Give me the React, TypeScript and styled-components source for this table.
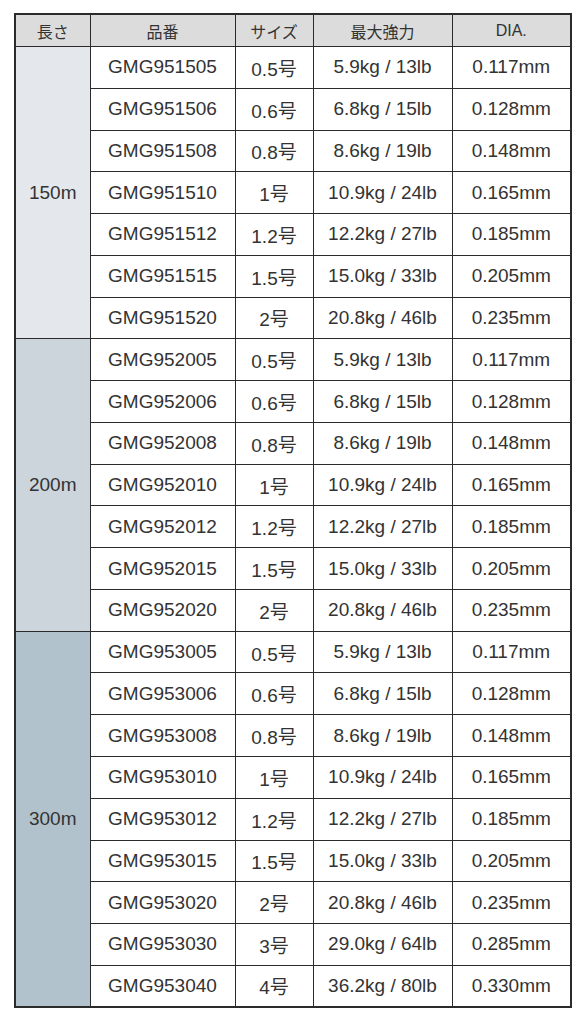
import React from "react";
import styled, { createGlobalStyle } from "styled-components";

const GlobalStyle = createGlobalStyle`
  body {
    margin:0;
    background:#fff;
    font-family:"Liberation Sans", "Noto Sans CJK JP", sans-serif;
  }
`;

const Wrapper = styled.div`
  padding:13px 14px 0 14px;
`;

const Table = styled.table`
  width:556px;
  border-collapse:collapse;
  table-layout:fixed;
  border:2px solid #2b2b2b;
  color:#333;
`;

const HeadCell = styled.th`
  height:31px;
  padding:0;
  background:#dcdcdc;
  border:1px solid #2b2b2b;
  font-weight:normal;
  font-size:16px;
  text-align:center;
  vertical-align:middle;
`;

const Row = styled.tr`
  height:41.78px;
`;

const Cell = styled.td`
  padding:0;
  border:1px solid #2b2b2b;
  font-size:19px;
  text-align:center;
  vertical-align:middle;
  background:#fff;
  white-space:nowrap;
`;

const LengthCell = styled(Cell)<{ $shade: string }>`
  background:${(p) => p.$shade};
`;

type Item = [string, string, string, string];

const groups: { length: string; shade: string; base: string; items: [string, string, string, string][] }[] = [
  {
    length: "150m",
    shade: "#e4e8ec",
    base: "GMG9515",
    items: [],
  },
  {
    length: "200m",
    shade: "#ccd4dc",
    base: "GMG9520",
    items: [],
  },
  {
    length: "300m",
    shade: "#b2c2cc",
    base: "GMG9530",
    items: [],
  },
];

const specs: Item[] = [
  ["05", "0.5号", "5.9kg / 13lb", "0.117mm"],
  ["06", "0.6号", "6.8kg / 15lb", "0.128mm"],
  ["08", "0.8号", "8.6kg / 19lb", "0.148mm"],
  ["10", "1号", "10.9kg / 24lb", "0.165mm"],
  ["12", "1.2号", "12.2kg / 27lb", "0.185mm"],
  ["15", "1.5号", "15.0kg / 33lb", "0.205mm"],
  ["20", "2号", "20.8kg / 46lb", "0.235mm"],
];

const extra: Item[] = [
  ["30", "3号", "29.0kg / 64lb", "0.285mm"],
  ["40", "4号", "36.2kg / 80lb", "0.330mm"],
];

groups.forEach((g, i) => {
  g.items = i === 2 ? [...specs, ...extra] : specs;
});

export default function App() {
  return (
    <Wrapper>
      <GlobalStyle />
      <Table>
        <colgroup>
          <col style={{ width: 75 }} />
          <col style={{ width: 145 }} />
          <col style={{ width: 78 }} />
          <col style={{ width: 139 }} />
          <col style={{ width: 119 }} />
        </colgroup>
        <thead>
          <tr>
            <HeadCell>長さ</HeadCell>
            <HeadCell>品番</HeadCell>
            <HeadCell>サイズ</HeadCell>
            <HeadCell>最大強力</HeadCell>
            <HeadCell>DIA.</HeadCell>
          </tr>
        </thead>
        <tbody>
          {groups.map((g) =>
            g.items.map((it, idx) => (
              <Row key={g.base + it[0]}>
                {idx === 0 && (
                  <LengthCell $shade={g.shade} rowSpan={g.items.length}>
                    {g.length}
                  </LengthCell>
                )}
                <Cell>{g.base + it[0]}</Cell>
                <Cell>{it[1]}</Cell>
                <Cell>{it[2]}</Cell>
                <Cell>{it[3]}</Cell>
              </Row>
            ))
          )}
        </tbody>
      </Table>
    </Wrapper>
  );
}
